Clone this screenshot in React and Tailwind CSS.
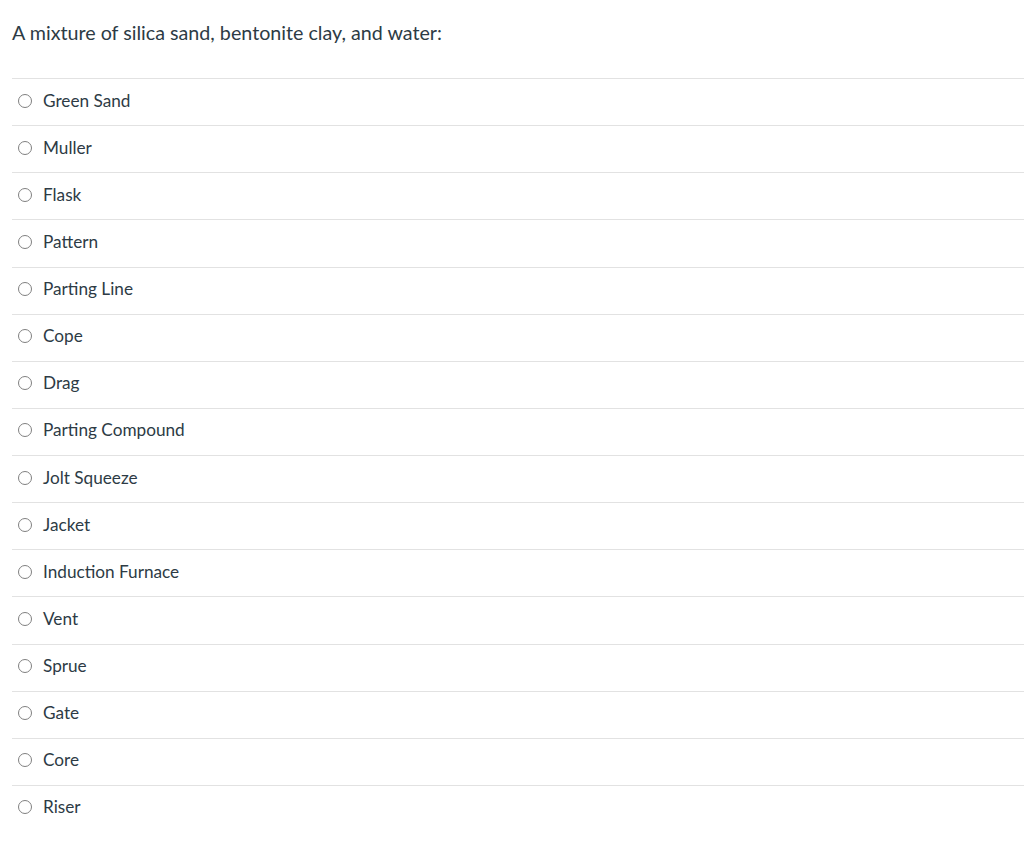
const options = [
  'Green Sand',
  'Muller',
  'Flask',
  'Pattern',
  'Parting Line',
  'Cope',
  'Drag',
  'Parting Compound',
  'Jolt Squeeze',
  'Jacket',
  'Induction Furnace',
  'Vent',
  'Sprue',
  'Gate',
  'Core',
  'Riser',
]

export default function App() {
  return (
    <div className="min-h-[842px] bg-white pl-3 text-[#2d3b45] font-['Lato',sans-serif]">
      <p className="pt-[19px] text-[19.7px] leading-[28px]">A mixture of silica sand, bentonite clay, and water:</p>
      <div className="mt-[31px]">
        {options.map((opt) => (
          <label
            key={opt}
            className="flex items-center h-[47.13px] pb-[3px] cursor-pointer border-t border-[#e2e2e2]"
          >
            <span className="ml-[6px] w-[14px] h-[14px] rounded-full border border-[#808080] bg-white shrink-0" />
            <span className="ml-[11px] text-[17.2px] leading-[20px]">{opt}</span>
          </label>
        ))}
      </div>
    </div>
  )
}
